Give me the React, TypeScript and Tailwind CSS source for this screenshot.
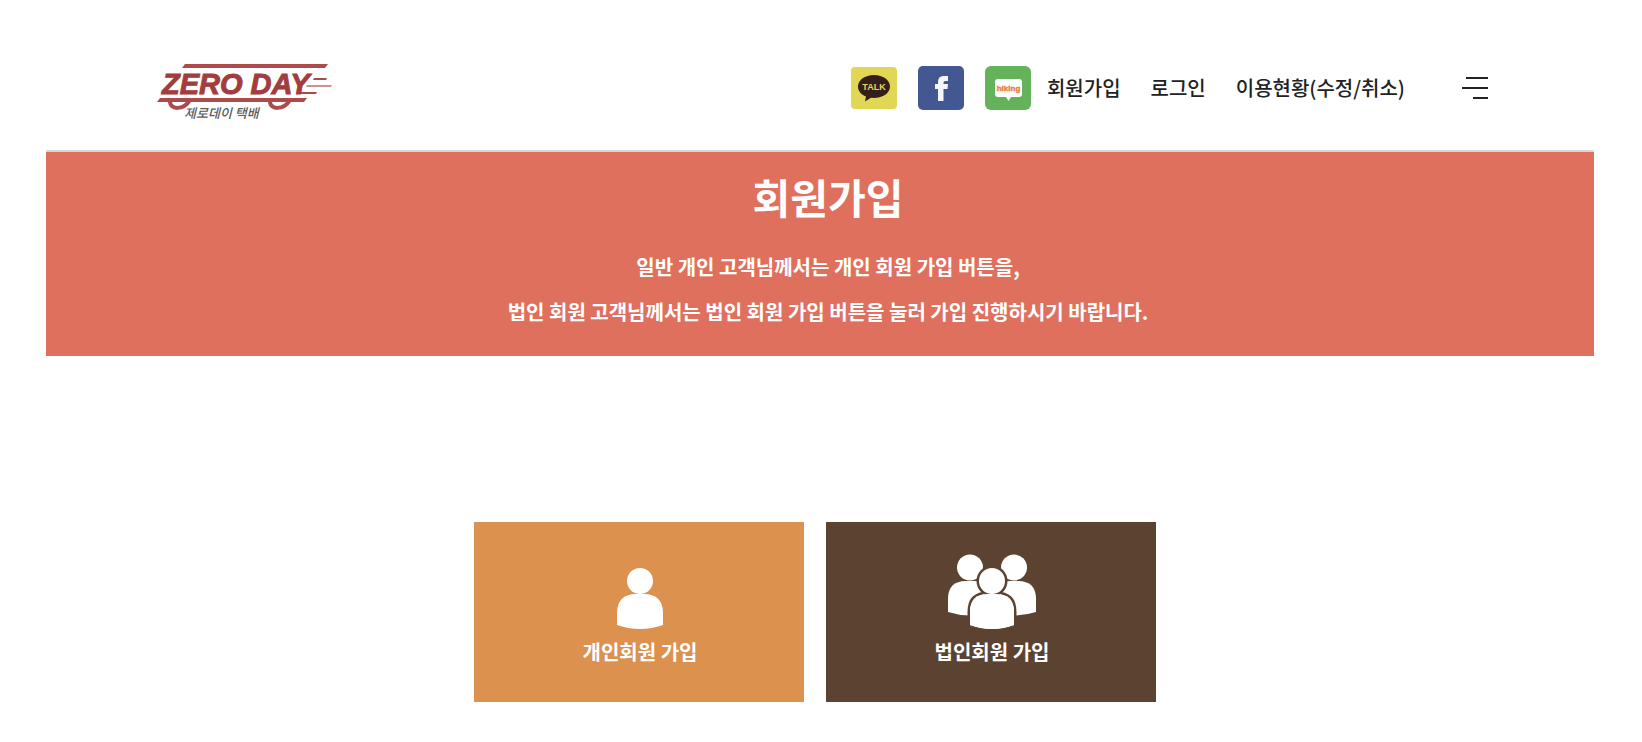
import React from 'react';

interface SocialLinkProps {
  label: string;
  children: React.ReactNode;
}

interface JoinCardProps {
  label: string;
  className: string;
  children: React.ReactNode;
}

const menuItems = ['회원가입', '로그인', '이용현황(수정/취소)'];

const Logo: React.FC = () => (
  <svg width="175" height="64" viewBox="0 0 175 64" className="overflow-visible" role="img" aria-label="ZERO DAY 제로데이 택배">
    <g fill="#ad4a4b">
      <path d="M28 0h143l-3 4H25z" />
      <path d="M157 14h13l-1 2h-13z" />
      <path d="M150 21h25l-1 2h-25z" opacity="0.6" />
      <path d="M143 28h17l-1 2h-17z" />
      <path d="M3 34h147l-3 4H0z" />
    </g>
    <g fill="none" stroke="#ad4a4b" strokeWidth="4">
      <path d="M13 36c-1 11 14 10 20 0" />
      <path d="M113 36c-1 11 14 10 20 0" />
    </g>
    <text x="5" y="30" fontSize="29" fontWeight="700" fontStyle="italic" fill="#a33c3d" stroke="#a33c3d" strokeWidth="1" fontFamily="'Liberation Sans', sans-serif">
      ZERO DAY
    </text>
    <text x="27" y="54" fontSize="13" fontWeight="500" fontStyle="italic" fill="#5b5b5b" fontFamily="'Noto Sans CJK KR', sans-serif">
      제로데이 택배
    </text>
  </svg>
);

const TalkIcon: React.FC = () => (
  <svg width="46" height="42" viewBox="0 0 46 42" aria-hidden="true">
    <rect width="46" height="42" rx="4" fill="#e2d755" />
    <path d="M23 8c9 0 16 5 16 11.500s-7 11.500-16 11.500l-3-.3L14 34.500l1-5C10 27.500 7 24 7 19.500 7 13 14 8 23 8z" fill="#351f1b" />
    <text x="23" y="23" textAnchor="middle" fontSize="9" fontWeight="700" fill="#e2d755" fontFamily="'Liberation Sans', sans-serif">
      TALK
    </text>
  </svg>
);

const FacebookIcon: React.FC = () => (
  <svg width="46" height="44" viewBox="0 0 46 44" aria-hidden="true">
    <rect width="46" height="44" rx="5" fill="#435893" />
    <path d="M20 35V23H17v-5h3v-1.500c0-4.500 2-6.500 6-6.500h4v5h-2.500c-1.500 0-2 .7-2 2V18H30l-.5 5h-4v12z" fill="#f4f6fb" />
  </svg>
);

const BandIcon: React.FC = () => (
  <svg width="46" height="44" viewBox="0 0 46 44" aria-hidden="true">
    <rect width="46" height="44" rx="6" fill="#64b35a" />
    <path d="M13 13h21q3 0 3 3v12q0 3-3 3h-8l-2.500 4L21 31h-8q-3 0-3-3V16q0-3 3-3z" fill="#fff" />
    <text x="23.500" y="25" textAnchor="middle" fontSize="8" fontWeight="700" fill="#e5803c" stroke="#e5803c" strokeWidth="0.4" fontFamily="'Liberation Sans', sans-serif">
      hiking
    </text>
  </svg>
);

const PersonIcon: React.FC = () => (
  <svg width="46" height="76" viewBox="0 0 46 76" fill="#fff" aria-hidden="true">
    <circle cx="23" cy="27" r="13" />
    <path d="M0 71V58Q1 40 19 40H27Q45 40 46 58V71Q23 79 0 71z" />
  </svg>
);

const GroupIcon: React.FC = () => (
  <svg width="90" height="76" viewBox="0 0 90 76" fill="#fff" aria-hidden="true">
    <circle cx="23" cy="13.500" r="13" />
    <circle cx="67" cy="13.500" r="13" />
    <path d="M1 58V45Q1 27 19 27H27Q45 27 45 45V58Q23 65 1 58z" />
    <path d="M45 58V45Q45 27 63 27H71Q89 27 89 45V58Q67 65 45 58z" />
    <g stroke="#5c4230" strokeWidth="5" paintOrder="stroke">
      <path d="M23 71V58Q23 40 41 40H49Q67 40 67 58V71Q45 79 23 71z" />
      <circle cx="45" cy="27" r="13" />
    </g>
    <path d="M23 71V58Q23 40 41 40H49Q67 40 67 58V71Q45 79 23 71z" />
  </svg>
);

const SocialLink: React.FC<SocialLinkProps> = ({ label, children }) => (
  <a href="#" aria-label={label} className="block">
    {children}
  </a>
);

const JoinCard: React.FC<JoinCardProps> = ({ label, className, children }) => (
  <button
    type="button"
    className={`flex h-[180px] w-[330px] cursor-pointer flex-col items-center pt-8 pl-0.5 text-xl font-bold text-white ${className}`}
  >
    {children}
    <span className="mt-2">{label}</span>
  </button>
);

const App: React.FC = () => {
  return (
    <div className="min-h-screen bg-white pr-12 pl-[46px] font-['Noto_Sans_CJK_KR',sans-serif] text-[#222]">
      {/* Header */}
      <header className="flex h-[152px] items-start justify-between border-b-2 border-[#d5d8d8] pt-16 pr-[106px] pl-[111px]">
        <a href="#">
          <Logo />
        </a>

        <div className="flex h-12 items-center">
          <div className="flex items-center gap-[21px]">
            <SocialLink label="카카오톡"><TalkIcon /></SocialLink>
            <SocialLink label="페이스북"><FacebookIcon /></SocialLink>
            <SocialLink label="밴드"><BandIcon /></SocialLink>
          </div>
          <nav className="ml-4 flex items-center gap-[30px] text-xl font-medium whitespace-nowrap">
            {menuItems.map(item => (
              <a key={item} href="#">{item}</a>
            ))}
          </nav>
          <button type="button" aria-label="메뉴" className="ml-[57px] flex cursor-pointer flex-col items-end gap-2">
            <span className="h-0.5 w-[22px] bg-[#222]" />
            <span className="h-0.5 w-[26px] bg-[#222]" />
            <span className="h-0.5 w-[15px] bg-[#222]" />
          </button>
        </div>
      </header>

      <main>
        {/* Banner */}
        <section className="h-[204px] bg-[#df705e] pt-3.5 pl-4 text-center text-white">
          <h1 className="text-[41px] leading-[60px] font-bold">회원가입</h1>
          <p className="mt-4.5 text-xl leading-[45px] font-bold">
            일반 개인 고객님께서는 개인 회원 가입 버튼을,
            <br />
            법인 회원 고객님께서는 법인 회원 가입 버튼을 눌러 가입 진행하시기 바랍니다.
          </p>
        </section>

        {/* Join type */}
        <section className="mt-[166px] flex justify-center gap-[22px] pr-2.5">
          <JoinCard label="개인회원 가입" className="bg-[#dc914f]">
            <PersonIcon />
          </JoinCard>
          <JoinCard label="법인회원 가입" className="bg-[#5c4230]">
            <GroupIcon />
          </JoinCard>
        </section>
      </main>
    </div>
  );
};

export default App;
